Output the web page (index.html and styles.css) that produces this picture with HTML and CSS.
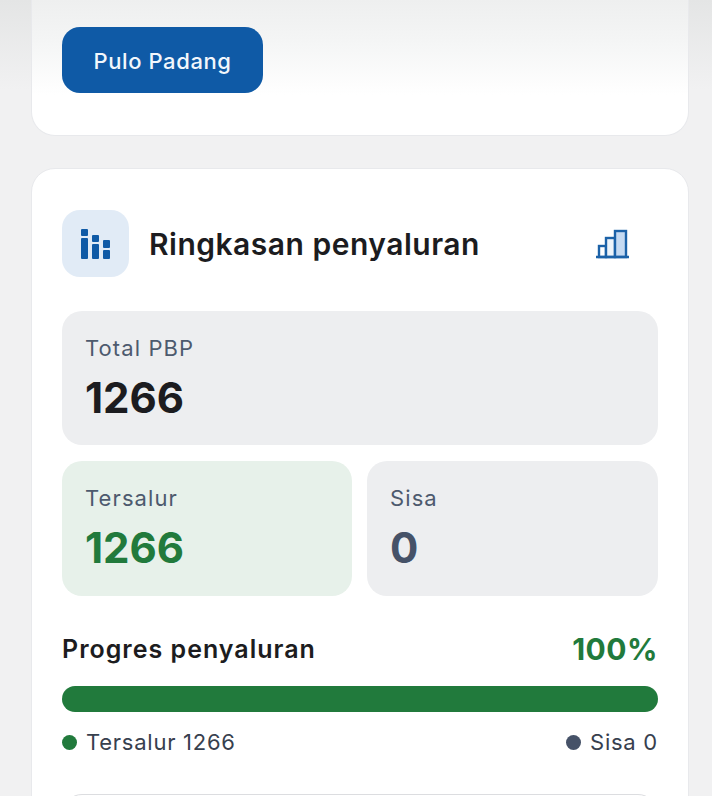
FILE: index.html
```html
<!DOCTYPE html>
<html lang="en">
<head>
    <meta charset="UTF-8">
    <meta name="viewport" content="width=device-width, initial-scale=1.0">
    <title>Ringkasan penyaluran</title>
    <link rel="stylesheet" href="styles.css">
</head>
<body>
    <div class="page">
        <div class="card card-top">
            <button class="btn-location">Pulo Padang</button>
        </div>

        <div class="card card-summary">
            <div class="summary-header">
                <div class="header-icon">
                    <svg width="29" height="30" viewBox="0 0 29 30" fill="#0f5aa6">
                        <rect x="0" y="0" width="7" height="7" rx="1"/>
                        <rect x="0" y="9" width="7" height="21" rx="1"/>
                        <rect x="11" y="6" width="7" height="7" rx="1"/>
                        <rect x="11" y="15" width="7" height="15" rx="1"/>
                        <rect x="22" y="11" width="7" height="8" rx="1"/>
                        <rect x="22" y="21" width="7" height="9" rx="1"/>
                    </svg>
                </div>
                <h2>Ringkasan penyaluran</h2>
                <svg class="header-chart" width="34" height="30" viewBox="0 0 34 30" fill="none" stroke="#1c62a8" stroke-width="2.4">
                    <rect x="3" y="17" width="7" height="11" fill="#fff"/>
                    <rect x="10" y="9" width="9" height="19" fill="#eef4fa"/>
                    <rect x="19" y="2" width="11" height="26" fill="#c5daf2"/>
                    <path d="M0 28h33"/>
                </svg>
            </div>

            <div class="stat-box">
                <div class="stat-label">Total PBP</div>
                <div class="stat-number">1266</div>
            </div>

            <div class="stat-row">
                <div class="stat-box stat-green">
                    <div class="stat-label">Tersalur</div>
                    <div class="stat-number">1266</div>
                </div>
                <div class="stat-box stat-rest">
                    <div class="stat-label">Sisa</div>
                    <div class="stat-number">0</div>
                </div>
            </div>

            <div class="progress-head">
                <span class="progress-title">Progres penyaluran</span>
                <span class="progress-value">100%</span>
            </div>
            <div class="progress-bar"></div>
            <div class="legend">
                <div class="legend-item"><span class="dot dot-green"></span>Tersalur 1266</div>
                <div class="legend-item"><span class="dot dot-slate"></span>Sisa 0</div>
            </div>

            <div class="next-box"></div>
        </div>
    </div>
</body>
</html>
```

FILE: styles.css
```css
* {
    margin: 0;
    padding: 0;
    box-sizing: border-box;
}

html,
body {
    height: 796px;
    overflow: hidden;
}

body {
    font-family: Inter, "Liberation Sans", sans-serif;
    background: linear-gradient(#e4e5e5 0, #f1f1f2 90px);
    color: #1c1c20;
}

.page {
    padding: 0 23px 0 31px;
}

.card {
    background: white;
    border: 1px solid #e8e9ec;
    border-radius: 24px;
}

.card-top {
    height: 136px;
    padding: 27px 30px 0;
    border-top: none;
    border-top-left-radius: 0;
    border-top-right-radius: 0;
    background: linear-gradient(#eeefef 0, #f4f5f5 40px, white 95px);
}

.btn-location {
    display: block;
    width: 201px;
    height: 66px;
    padding-top: 2px;
    background: #0f5aa6;
    color: #f2f7fc;
    border: none;
    border-radius: 18px;
    font-family: inherit;
    font-size: 22px;
    font-weight: 500;
    letter-spacing: 0.6px;
}

.card-summary {
    margin-top: 32px;
    padding: 41px 30px 0;
    height: 700px;
}

.summary-header {
    display: flex;
    align-items: center;
    margin-bottom: 34px;
}

.header-icon {
    width: 67px;
    height: 67px;
    flex-shrink: 0;
    display: flex;
    align-items: center;
    justify-content: center;
    background: #e1ebf6;
    border-radius: 18px;
    margin-right: 20px;
}

.summary-header h2 {
    flex: 1;
    font-size: 30px;
    font-weight: 600;
    letter-spacing: 0.5px;
}

.header-chart {
    margin-right: 28px;
}

.stat-box {
    height: 134px;
    padding: 23px 23px 0;
    background: #edeef0;
    border-radius: 20px;
}

.stat-label {
    font-size: 22px;
    line-height: 28px;
    letter-spacing: 1.1px;
    color: #4d5a6e;
}

.stat-number {
    margin-top: 12px;
    font-size: 42px;
    line-height: 48px;
    font-weight: 700;
    color: #1c1c20;
}

.stat-row {
    display: grid;
    grid-template-columns: 290px 1fr;
    gap: 15px;
    margin-top: 16px;
}

.stat-row .stat-box {
    height: 135px;
}

.stat-green {
    background: #e7f1ea;
}

.stat-green .stat-number {
    color: #217a3c;
}

.stat-rest .stat-number {
    color: #465268;
}

.progress-head {
    display: flex;
    justify-content: space-between;
    align-items: center;
    margin-top: 36px;
    height: 34px;
}

.progress-title {
    font-size: 25px;
    font-weight: 600;
    letter-spacing: 1px;
}

.progress-value {
    font-size: 30px;
    font-weight: 700;
    letter-spacing: 0.5px;
    color: #217a3c;
}

.progress-bar {
    height: 26px;
    margin-top: 20px;
    background: #217a3c;
    border-radius: 13px;
}

.legend {
    display: flex;
    justify-content: space-between;
    margin-top: 16px;
    font-size: 22px;
    line-height: 28px;
    letter-spacing: 0.75px;
    color: #37404e;
}

.legend-item {
    display: flex;
    align-items: center;
    gap: 9px;
}

.dot {
    width: 15px;
    height: 15px;
    border-radius: 50%;
}

.dot-green {
    background: #217a3c;
}

.dot-slate {
    background: #465268;
}

.next-box {
    height: 80px;
    margin-top: 38px;
    border: 1px solid #dcdde0;
    border-radius: 20px;
}
```
